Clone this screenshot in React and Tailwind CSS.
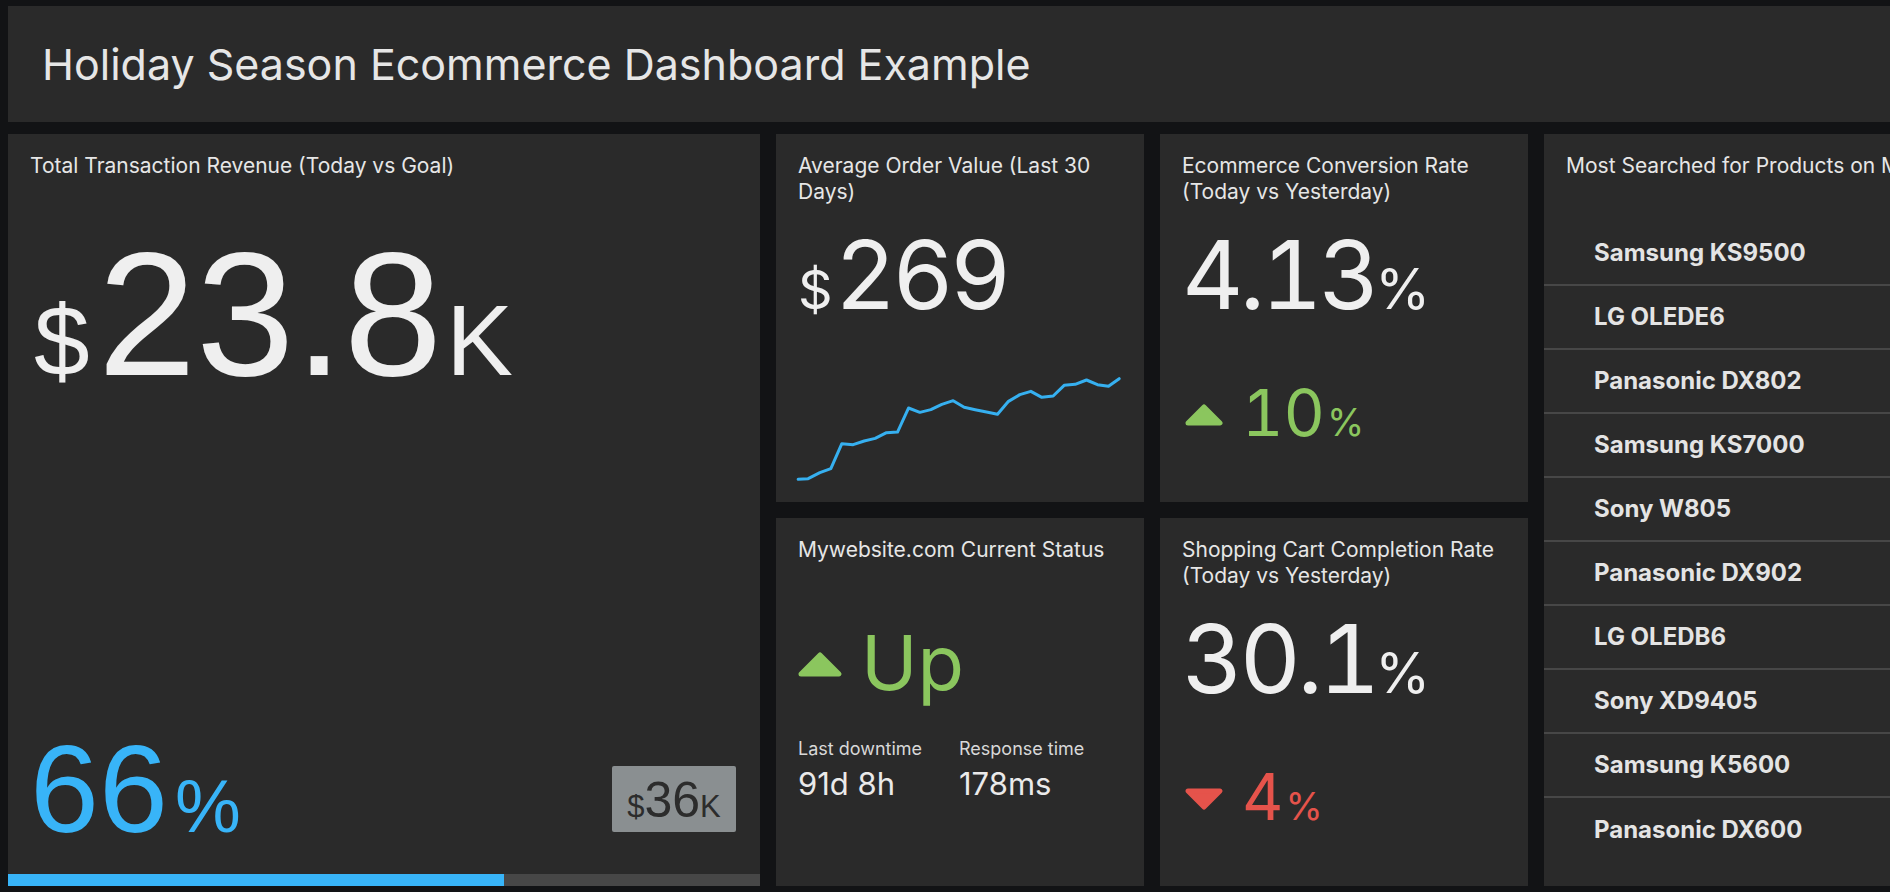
import React from 'react';

const sans = { fontFamily: 'Inter, "Noto Sans", sans-serif' };

const sparkPoints = [
  [115, 1077], [145, 1075], [180, 1057], [213, 1045], [246, 970], [280, 973], [313, 962], [346, 954],
  [380, 937], [413, 935], [446, 863], [480, 876], [513, 868], [546, 852], [580, 841], [613, 861],
  [646, 868], [680, 875], [713, 882], [746, 843], [780, 823], [813, 813], [846, 831], [880, 827],
  [913, 795], [946, 792], [980, 779], [1013, 793], [1046, 798], [1078, 775],
];

const products = [
  'Samsung KS9500',
  'LG OLEDE6',
  'Panasonic DX802',
  'Samsung KS7000',
  'Sony W805',
  'Panasonic DX902',
  'LG OLEDB6',
  'Sony XD9405',
  'Samsung K5600',
  'Panasonic DX600',
];

// triangles leave empty room under the shape so the flex baseline lands below it
const TriangleUp = () => (
  <svg width="40" height="32" viewBox="0 0 40 32">
    <polygon points="4,19 20,3 36,19" fill="#8bc65e" stroke="#8bc65e" strokeWidth="5" strokeLinejoin="round" />
  </svg>
);

const TriangleDown = () => (
  <svg width="40" height="32" viewBox="0 0 40 32">
    <polygon points="4,3 20,19 36,3" fill="#e5534b" stroke="#e5534b" strokeWidth="5" strokeLinejoin="round" />
  </svg>
);

const Card = ({ className = '', children }) => (
  <div className={`bg-[#2a2a2a] flex flex-col overflow-hidden ${className}`}>{children}</div>
);

const Title = ({ children, className = '' }) => (
  <div className={`text-[21px] leading-[26px] text-[#e6e6e6] ${className}`}>{children}</div>
);

const RevenueCard = () => (
  <Card className="col-span-2 row-span-2">
    <Title className="pt-[19px] px-[22px]">Total Transaction Revenue (Today vs Goal)</Title>
    <div
      className="mt-[47px] pl-[26px] flex items-baseline text-[#efefef]"
      style={{ fontFamily: '"Liberation Sans", Arial, sans-serif' }}
    >
      <span className="text-[100px] leading-none">$</span>
      <span className="text-[177px] leading-none ml-[8px]">23.8</span>
      <span className="text-[100px] leading-none ml-[4px]">K</span>
    </div>
    <div
      className="mt-auto mb-[23px] pl-[22px] pr-6 flex items-end justify-between"
      style={{ fontFamily: '"Liberation Sans", Arial, sans-serif' }}
    >
      <div className="flex items-baseline text-[#38b4f8]">
        <span className="text-[124px] leading-none">66</span>
        <span className="text-[74px] leading-none ml-[7px]">%</span>
      </div>
      <div className="mb-[19px] w-[124px] h-[66px] rounded-[2px] bg-[#8a8f91] flex items-baseline justify-center pt-[9px] text-[#2c2c2c]">
        <span className="text-[31px] leading-none">$</span>
        <span className="text-[50px] leading-none">36</span>
        <span className="text-[31px] leading-none">K</span>
      </div>
    </div>
    <div className="h-3 bg-[#474747] flex">
      <div className="h-full bg-[#38b4f8]" style={{ width: '66%' }} />
    </div>
  </Card>
);

const OrderValueCard = () => (
  <Card className="px-[22px] pt-[19px] pb-[21px]">
    <Title>Average Order Value (Last 30 Days)</Title>
    <div className="mt-[22px] flex items-baseline text-[#efefef]">
      <span className="text-[54px] leading-none">$</span>
      <span className="text-[95px] leading-none tabular-nums tracking-[-4px] ml-[2px]">269</span>
    </div>
    <svg
      className="mt-auto overflow-visible"
      width="322"
      height="104"
      viewBox="115 770 965 312"
    >
      <polyline
        points={sparkPoints.map((p) => p.join(',')).join(' ')}
        fill="none"
        stroke="#36b0f0"
        strokeWidth="9"
        strokeLinejoin="round"
        strokeLinecap="round"
      />
    </svg>
  </Card>
);

const RateCard = ({ title, value, delta, up }) => (
  <Card className="px-[22px] pt-[19px]">
    <Title>{title}</Title>
    <div className="mt-[22px] flex items-baseline text-[#efefef]">
      <span className="text-[95px] leading-none tabular-nums tracking-[-4px]">{value}</span>
      <span className="text-[56px] leading-none -ml-[1px]">%</span>
    </div>
    <div className={`mt-[59px] pl-[2px] flex items-baseline ${up ? 'text-[#8bc65e]' : 'text-[#e5534b]'}`}>
      {up ? <TriangleUp /> : <TriangleDown />}
      <span className="text-[64px] leading-none tabular-nums ml-[18px]">{delta}</span>
      <span className="text-[38px] leading-none ml-[2px]">%</span>
    </div>
  </Card>
);

const StatusCard = () => (
  <Card className="px-[22px] pt-[19px]">
    <Title>Mywebsite.com Current Status</Title>
    <div className="mt-[61px] flex items-baseline text-[#8bc65e]">
      <svg width="46" height="39" viewBox="0 0 46 39" className="-ml-[1px]">
        <polygon points="4,23 23,4 42,23" fill="#8bc65e" stroke="#8bc65e" strokeWidth="5" strokeLinejoin="round" />
      </svg>
      <span className="text-[76px] leading-none ml-[18px]">Up</span>
    </div>
    <div className="mt-[38px] grid grid-cols-[161px_161px]">
      <div>
        <div className="text-[18px] leading-[22px] text-[#d8d8d8]">Last downtime</div>
        <div className="mt-[6px] text-[31px] leading-[36px] text-[#eaeaea]">91d 8h</div>
      </div>
      <div>
        <div className="text-[18px] leading-[22px] text-[#d8d8d8]">Response time</div>
        <div className="mt-[6px] text-[31px] leading-[36px] text-[#eaeaea]">178ms</div>
      </div>
    </div>
  </Card>
);

const ProductsCard = () => (
  <Card className="row-span-2">
    <Title className="pt-[19px] pl-[22px] whitespace-nowrap">Most Searched for Products on Mywebsite.com</Title>
    <ul className="mt-[43px]">
      {products.map((name, i) => (
        <li
          key={name}
          className={`h-16 flex items-center pl-[50px] text-[24px] font-bold text-[#e4e4e4] ${
            i < products.length - 1 ? 'border-b-2 border-[#474747]' : ''
          }`}
        >
          {name}
        </li>
      ))}
    </ul>
  </Card>
);

export default function App() {
  return (
    <div className="w-[1890px] h-[892px] overflow-hidden bg-[#121315] pt-[6px] pl-2" style={sans}>
      <header className="h-[116px] bg-[#2a2a2a] flex items-center pl-[34px]">
        <h1 className="text-[43px] leading-none text-[#e6e6e6]">Holiday Season Ecommerce Dashboard Example</h1>
      </header>
      <div className="mt-3 grid grid-cols-[repeat(5,368px)] grid-rows-[368px_368px] gap-4">
        <RevenueCard />
        <OrderValueCard />
        <RateCard title="Ecommerce Conversion Rate (Today vs Yesterday)" value="4.13" delta="10" up />
        <ProductsCard />
        <StatusCard />
        <RateCard title="Shopping Cart Completion Rate (Today vs Yesterday)" value="30.1" delta="4" />
      </div>
    </div>
  );
}
